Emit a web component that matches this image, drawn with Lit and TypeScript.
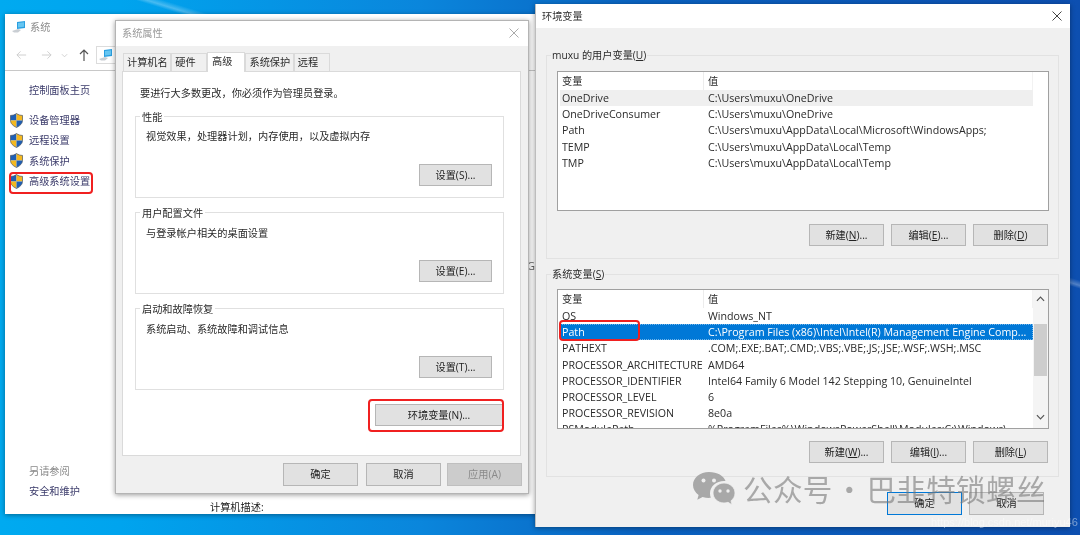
import { LitElement, html, css } from "lit";
import { customElement } from "lit/decorators.js";

const SHIELD = "M6.500 .5C8.300 1.800 10.300 2.400 12.500 2.400V7.500c0 3-2.400 5.300-6 7C2.900 12.800.5 10.500.5 7.500V2.400C2.700 2.400 4.700 1.800 6.500 .5Z";
const shield = () => html`<svg class="shield" viewBox="0 0 13 15" width="13" height="15">
  <defs><clipPath id="sc"><path d="${SHIELD}"/></clipPath></defs>
  <g clip-path="url(#sc)">
    <rect width="6.500" height="7.500" fill="#1f5fb5"/><rect x="6.500" width="6.500" height="7.500" fill="#f4b81f"/>
    <rect y="7.500" width="6.500" height="7.500" fill="#f4b81f"/><rect x="6.500" y="7.500" width="6.500" height="7.500" fill="#1f5fb5"/>
  </g>
  <path d="${SHIELD}" fill="none" stroke="#4a5560" stroke-width=".7"/>
</svg>`;

const pc = () => html`<svg viewBox="0 0 14 12" width="14" height="12">
  <path d="M5 1l8-1v7l-8 1Z" fill="#2a9fe0"/><path d="M6 2l6-.8v4.600l-6 .8Z" fill="#66c6f2"/>
  <path d="M0 10l6-2 3 1-3 2.600H2Z" fill="#c9ced3"/>
</svg>`;

const close = () => html`<svg viewBox="0 0 10 10" width="10" height="10"><path d="M.5.5l9 9M9.500.5l-9 9" stroke="currentColor" stroke-width="1" fill="none"/></svg>`;

const btn = (label: unknown, cls = "") => html`<div class="btn ${cls}">${label}</div>`;

const group = (title: string, body: string, b: unknown) => html`<section class="group">
  <div class="legend">${title}</div>
  <div class="gbody">${body}</div>
  ${btn(b, "gbtn")}
</section>`;

type Row = [string, string];
const userRows: Row[] = [
  ["OneDrive", "C:\\Users\\muxu\\OneDrive"],
  ["OneDriveConsumer", "C:\\Users\\muxu\\OneDrive"],
  ["Path", "C:\\Users\\muxu\\AppData\\Local\\Microsoft\\WindowsApps;"],
  ["TEMP", "C:\\Users\\muxu\\AppData\\Local\\Temp"],
  ["TMP", "C:\\Users\\muxu\\AppData\\Local\\Temp"],
];
const sysRows: Row[] = [
  ["OS", "Windows_NT"],
  ["Path", "C:\\Program Files (x86)\\Intel\\Intel(R) Management Engine Comp..."],
  ["PATHEXT", ".COM;.EXE;.BAT;.CMD;.VBS;.VBE;.JS;.JSE;.WSF;.WSH;.MSC"],
  ["PROCESSOR_ARCHITECTURE", "AMD64"],
  ["PROCESSOR_IDENTIFIER", "Intel64 Family 6 Model 142 Stepping 10, GenuineIntel"],
  ["PROCESSOR_LEVEL", "6"],
  ["PROCESSOR_REVISION", "8e0a"],
  ["PSModulePath", "%ProgramFiles%\\WindowsPowerShell\\Modules;C:\\Windows\\..."],
];

const list = (rows: Row[], kind: string, hi: number) => html`<div class="list ${kind}">
  <div class="lbody">
    <div class="lhead"><span class="c1">变量</span><span class="c2">值</span></div>
    ${rows.map((r, i) => html`<div class="lrow ${i === hi ? (kind === "sys" ? "sel" : "soft") : ""}">
      <span class="c1">${r[0]}</span><span class="c2">${r[1]}</span></div>`)}
  </div>
  ${kind === "sys"
    ? html`<div class="sb">
        <svg viewBox="0 0 10 6" width="9" height="6"><path d="M1 5l4-4 4 4" fill="none" stroke="#555" stroke-width="1.300"/></svg>
        <div class="thumb"></div>
        <svg viewBox="0 0 10 6" width="9" height="6"><path d="M1 1l4 4 4-4" fill="none" stroke="#555" stroke-width="1.300"/></svg>
      </div>`
    : html`<div class="sbspace"></div>`}
</div>`;

@customElement("app-root")
export class AppRoot extends LitElement {
  static styles = css`
    :host { display: block; width: 1080px; height: 535px; overflow: hidden; }
    * { box-sizing: border-box; }
    .desk {
      position: relative; width: 1080px; height: 535px; overflow: hidden;
      font: 10.2px/14px "Open Sans", "Noto Sans CJK SC", sans-serif; color: #2a2a2a;
      background:
        linear-gradient(17deg, transparent 0 66.6%, rgba(255,255,255,.28) 67%, transparent 67.6%),
        linear-gradient(90deg, #00aaf0 0, #00a4ee 120px, #0a86dc 420px, #0a62c0 640px, #0d4fb0 1080px);
      filter: blur(.3px);
    }
    .win { position: absolute; display: flex; flex-direction: column; box-shadow: 0 1px 5px rgba(0,0,0,.4); }

    /* System window */
    .sys { left: 5px; top: 14px; width: 535px; height: 500px; background: #fff; }
    .stitle { display: flex; align-items: center; gap: 4px; height: 26px; padding: 0 0 1px 7px; color: #8a8a8a; }
    .snav { display: flex; align-items: center; height: 31px; padding-left: 11px; gap: 14px; border-bottom: 1px solid #c8c8c8; color: #bbb; }
    .snav svg { flex: none; }
    .addr { display: flex; align-items: center; justify-content: center; width: 20px; height: 18px; border: 1px solid #dcdcdc; margin-left: -7px; }
    .side { display: flex; flex-direction: column; padding: 11px 0 0 5px; flex: 1; color: #3a3a6a; }
    .home { padding-left: 19px; height: 20px; line-height: 14px; margin-bottom: 7px; margin-top: 1px; }
    .item { display: flex; align-items: center; gap: 6px; height: 20.3px; }
    .item .shield { flex: none; }
    .seealso { margin-top: auto; padding-left: 19px; color: #8a8a8a; height: 20px; }
    .safety { padding-left: 19px; height: 30px; }
    .desc { position: absolute; left: 205px; top: 486px; color: #222; }
    .peek { position: absolute; left: 522px; top: 245px; color: #666; font-size: 11px; }

    /* Dialog chrome */
    .dlg { background: #f0f0f0; border: 1px solid #b4b4b4; }
    .dtitle { display: flex; justify-content: space-between; align-items: center; background: #fff; flex: none; }
    .prop { left: 115px; top: 20px; width: 414px; height: 474px; }
    .prop .dtitle { height: 25px; padding: 0 9px 2px 6px; color: #999; }
    .prop .dtitle svg { color: #aaa; }
    .tabs { display: flex; align-items: flex-end; height: 25px; padding-left: 7px; flex: none; }
    .tab { height: 18px; line-height: 17px; padding: 0 0 0 3px; border: 1px solid #dadada; border-bottom: 0; background: #f0f0f0; white-space: nowrap; }
    .t4 { width: 48.300px; }
    .t2 { width: 35.800px; }
    .tab.on { width: 38.400px; height: 20px; background: #fff; padding-left: 4px; margin-bottom: -1px; position: relative; z-index: 1; }
    .pane { flex: none; margin-left: 6px; width: 399px; height: 385px; background: #fff; border: 1px solid #dadada; display: flex; flex-direction: column; padding: 14px 16px 0 12px; }
    .notice { padding-left: 5px; height: 30px; }
    .group { border: 1px solid #e0e0e0; width: 369px; height: 82px; margin-bottom: 14px; display: flex; flex-direction: column; padding: 0 11px 11px 10px; }
    .legend { margin: -7px 0 0 -6px; padding: 0 2px; width: fit-content; background: #fff; height: 14px; }
    .gbody { margin-top: 5px; }
    .group + .group .gbody { margin-top: 6px; }
    .btn { display: flex; align-items: center; justify-content: center; width: 75px; height: 22.500px; background: #e1e1e1; border: 1px solid #b6b6b6; flex: none; color: #222; white-space: nowrap; }
    .gbtn { margin-top: auto; align-self: flex-end; width: 73px; }
    .envbtn { align-self: flex-end; width: 128px; margin: 0 1px 0 0; height: 22px; position: relative; }
    .foot { display: flex; justify-content: flex-end; gap: 8px; padding: 7px 6px 0 0; }
    .foot .btn:last-child { margin-left: -2px; background: #cccccc; border-color: #bfbfbf; color: #8a8a8a; }

    /* Env dialog */
    .env { left: 535px; top: 4px; width: 535px; height: 523px; border: 0; border-left: 1px solid #bdbdbd; }
    .env .dtitle { height: 24px; padding: 0 8px 0 6px; color: #333; }
    .env .dtitle svg { color: #444; }
    .egroup { margin: 27px 0 0 10px; width: 513px; border: 1px solid #e2e2e2; padding: 0 10px 12px 10px; display: flex; flex-direction: column; }
    .eg1 { height: 204px; }
    .eg2 { height: 203px; margin-top: 15px; padding-bottom: 13px; }
    .eg1 .list { margin-top: 9px; }
    .eg2 .list { margin-top: 8px; }
    .egroup .legend { margin: -8px 0 0 -6px; background: #f0f0f0; height: 14px; padding: 0 1px; }
    .egroup u { text-underline-offset: 1px; }
    .list { display: flex; height: 140px; width: 491.500px; background: #fff; border: 1px solid #a0a0a0; padding-left: 2px; overflow: hidden; flex: none; font-size: 10.660px; }
    .lbody { flex: 1; min-width: 0; overflow: hidden; }
    .lhead { display: flex; height: 18px; align-items: center; border-right: 1px solid #f2f2f2; font-size: 10.200px; }
    .lhead .c1 { border-right: 1px solid #ececec; height: 18px; line-height: 18px; }
    .lrow { display: flex; height: 16.200px; line-height: 16.200px; align-items: center; }
    .lrow.soft { background: #efefef; }
    .lrow.sel { background: #0078d7; color: #fff; outline: 1px dotted rgba(255,255,255,.45); outline-offset: -1px; }
    .c1 { width: 144px; padding-left: 2px; flex: none; white-space: nowrap; overflow: hidden; }
    .c2 { padding-left: 4px; white-space: nowrap; }
    .sbspace { width: 15px; flex: none; }
    .sb { width: 15px; flex: none; background: #f4f4f4; display: flex; flex-direction: column; align-items: center; padding: 6px 0 8px; }
    .thumb { width: 13px; height: 52px; background: #cdcdcd; margin: 22px 0 auto; }
    .ebtns { display: flex; justify-content: flex-end; gap: 7px; margin-top: auto; }
    .efoot { display: flex; justify-content: flex-end; gap: 7px; padding: 15px 26px 0 0; }
    .efoot .ok { border: 1.500px solid #0078d7; }

    /* Overlays */
    .mark { position: absolute; border: 2.500px solid #f02020; border-radius: 4px; }
    .wm { position: absolute; left: 693px; top: 471px; display: flex; align-items: center; gap: 8px; color: rgba(120,120,120,.6); font: 29.600px/36px "Noto Sans CJK SC", sans-serif; letter-spacing: .3px; word-spacing: -5px; white-space: nowrap; }
    .wm svg { flex: none; }
    .url { position: absolute; left: 931px; top: 515px; color: rgba(255,255,255,.45); font: 11px/14px "Liberation Sans", sans-serif; }
  `;

  render() {
    return html`<div class="desk">
      <div class="win sys">
        <div class="stitle">${pc()}<span>系统</span></div>
        <div class="snav">
          <svg viewBox="0 0 12 10" width="11" height="10"><path d="M11 5H1M5 1L1 5l4 4" fill="none" stroke="#ccc" stroke-width="1"/></svg>
          <svg viewBox="0 0 12 10" width="11" height="10"><path d="M1 5h10M7 1l4 4-4 4" fill="none" stroke="#ccc" stroke-width="1"/></svg>
          <svg viewBox="0 0 8 5" width="7" height="5" style="margin-left:-5px"><path d="M1 1l3 3 3-3" fill="none" stroke="#ccc"/></svg>
          <svg viewBox="0 0 10 12" width="10" height="12" style="margin-left:-3px"><path d="M5 12V1M1 5l4-4 4 4" fill="none" stroke="#555" stroke-width="1.200"/></svg>
          <div class="addr">${pc()}</div>
        </div>
        <div class="side">
          <div class="home">控制面板主页</div>
          <div class="item">${shield()}<span>设备管理器</span></div>
          <div class="item">${shield()}<span>远程设置</span></div>
          <div class="item">${shield()}<span>系统保护</span></div>
          <div class="item">${shield()}<span>高级系统设置</span></div>
          <div class="seealso">另请参阅</div>
          <div class="safety">安全和维护</div>
        </div>
        <div class="desc">计算机描述:</div>
        <div class="peek">G</div>
      </div>

      <div class="win dlg prop">
        <div class="dtitle"><span>系统属性</span>${close()}</div>
        <div class="tabs">
          <div class="tab t4">计算机名</div><div class="tab t2">硬件</div><div class="tab on">高级</div><div class="tab t4">系统保护</div><div class="tab t2">远程</div>
        </div>
        <div class="pane">
          <div class="notice">要进行大多数更改，你必须作为管理员登录。</div>
          ${group("性能", "视觉效果，处理器计划，内存使用，以及虚拟内存", "设置(S)...")}
          ${group("用户配置文件", "与登录帐户相关的桌面设置", "设置(E)...")}
          ${group("启动和故障恢复", "系统启动、系统故障和调试信息", "设置(T)...")}
          ${btn("环境变量(N)...", "envbtn")}
        </div>
        <div class="foot">${btn("确定")}${btn("取消")}${btn("应用(A)")}</div>
      </div>

      <div class="win dlg env">
        <div class="dtitle"><span>环境变量</span>${close()}</div>
        <section class="egroup eg1">
          <div class="legend">muxu 的用户变量(<u>U</u>)</div>
          ${list(userRows, "user", 0)}
          <div class="ebtns">${btn(html`新建(<u>N</u>)...`)}${btn(html`编辑(<u>E</u>)...`)}${btn(html`删除(<u>D</u>)`)}</div>
        </section>
        <section class="egroup eg2">
          <div class="legend">系统变量(<u>S</u>)</div>
          ${list(sysRows, "sys", 1)}
          <div class="ebtns">${btn(html`新建(<u>W</u>)...`)}${btn(html`编辑(<u>I</u>)...`)}${btn(html`删除(<u>L</u>)`)}</div>
        </section>
        <div class="efoot">${btn("确定", "ok")}${btn("取消")}</div>
      </div>

      <div class="mark" style="left:9px;top:172px;width:84px;height:22px"></div>
      <div class="mark" style="left:368px;top:399px;width:136px;height:33px"></div>
      <div class="mark" style="left:559px;top:320px;width:81px;height:21px"></div>

      <div class="wm">
        <svg viewBox="0 0 42 34" width="42" height="34">
          <path d="M16 0C7 0 0 5.800 0 13c0 4 2.200 7.500 5.600 10l-1.300 4.800 5.300-2.900c2 .7 4.200 1 6.400 1 .6 0 1.200 0 1.800-.1-.5-1.400-.8-2.800-.8-4.300C17 14.200 23.500 9 31 9c.6 0 1 0 1.500.1C31 3.800 24.200 0 16 0Z" fill="#a8a8a8"/>
          <circle cx="10.500" cy="8.500" r="2" fill="#eee"/><circle cx="21" cy="8.500" r="2" fill="#eee"/>
          <path d="M31 11c-6 0-11 4.500-11 10s5 10 11 10c1.400 0 2.700-.2 4-.7l4 2.500-1-4c2.500-1.800 4-4.600 4-7.800 0-5.500-5-10-11-10Z" fill="#a8a8a8" stroke="#efefef" stroke-width=".8"/>
          <circle cx="27" cy="19" r="1.700" fill="#eee"/><circle cx="35" cy="19" r="1.700" fill="#eee"/>
        </svg>
        <span>公众号 · 巴韭特锁螺丝</span>
      </div>
      <div class="url">https://blog.csdn.net/muriyu46</div>
    </div>`;
  }
}
